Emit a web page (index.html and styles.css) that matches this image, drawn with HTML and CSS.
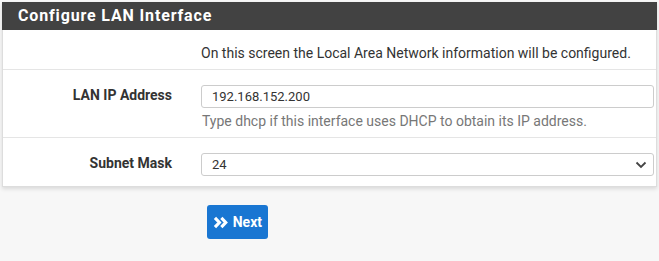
FILE: index.html
```html
<!DOCTYPE html>
<html>
<head>
<meta charset="utf-8">
<link rel="stylesheet" href="styles.css">
</head>
<body>
<div class="panel">
  <div class="panel-heading">Configure LAN Interface</div>
  <div class="panel-body">
    <div class="row row-intro">
      <div class="label"></div>
      <div class="field"><span class="intro">On this screen the Local Area Network information will be configured.</span></div>
    </div>
    <div class="row row-ip">
      <div class="label">LAN IP Address</div>
      <div class="field">
        <input class="control" type="text" value="192.168.152.200">
        <div class="help">Type dhcp if this interface uses DHCP to obtain its IP address.</div>
      </div>
    </div>
    <div class="row row-mask">
      <div class="label">Subnet Mask</div>
      <div class="field">
        <div class="select control">
          <span>24</span>
          <svg class="caret" width="12" height="8" viewBox="0 0 12 8"><path d="M1.5 1.5 L6 6 L10.5 1.5" fill="none" stroke="#444" stroke-width="1.8"/></svg>
        </div>
      </div>
    </div>
  </div>
</div>
<div class="actions">
  <button class="btn">
    <svg width="16" height="13" viewBox="0 0 16 13"><path d="M2 1.8 L6.5 6.5 L2 11.2 M8.5 1.8 L13 6.5 L8.5 11.2" fill="none" stroke="#fff" stroke-width="3.2"/></svg>
    <span>Next</span>
  </button>
</div>
</body>
</html>
```

FILE: styles.css
```css
html, body {
  margin: 0;
  padding: 0;
  background: #f7f7f7;
  font-family: Roboto, "Liberation Sans", Arial, sans-serif;
  font-size: 14px;
  color: #333;
}
.panel {
  margin: 2px 2px 0 2px;
  background: #fff;
  border: 1px solid #ddd;
  border-top: none;
  box-shadow: 0 2px 4px rgba(0,0,0,0.12);
}
.panel-heading {
  background: #424242;
  color: #fff;
  font-weight: bold;
  font-size: 16px;
  letter-spacing: 0.85px;
  height: 28px;
  line-height: 28px;
  padding-left: 16px;
  margin: 0 -1px;
}
.row {
  display: flex;
  border-bottom: 1px solid #e5e5e5;
}
.row:last-child { border-bottom: none; }
.label {
  width: 169px;
  flex: none;
  text-align: right;
  font-weight: bold;
  color: #333;
  padding-right: 29px;
  box-sizing: content-box;
}
.field {
  flex: 1;
  min-width: 0;
  padding-right: 2px;
}
.row-intro {
  height: 39px;
  align-items: center;
}
.row-intro .field {
  text-align: right;
  white-space: nowrap;
  padding-right: 26px;
  padding-top: 6px;
}
.row-ip {
  height: 68px;
  padding-top: 15px;
  box-sizing: border-box;
}
.row-ip .label, .row-mask .label { padding-top: 2px; }
.control {
  display: block;
  box-sizing: border-box;
  width: 100%;
  height: 23px;
  border: 1px solid #ccc;
  border-radius: 3px;
  padding: 0 10px;
  font-family: inherit;
  font-size: 13px;
  color: #333;
  background: #fff;
  margin: 0;
}
.help {
  color: #777;
  margin-top: 5px;
  padding-left: 1px;
}
.row-mask {
  height: 48px;
  padding-top: 15px;
  box-sizing: border-box;
}
.select {
  display: flex;
  align-items: center;
  justify-content: space-between;
  padding-right: 6px;
}
.actions {
  padding: 18px 0 0 207px;
}
.btn {
  display: flex;
  align-items: center;
  gap: 4px;
  height: 34px;
  width: 61px;
  box-sizing: border-box;
  padding: 0 6px 0 6px;
  background: #1976d2;
  color: #fff;
  border: none;
  border-radius: 3px;
  font-family: inherit;
  font-size: 14px;
  font-weight: bold;
}
```
